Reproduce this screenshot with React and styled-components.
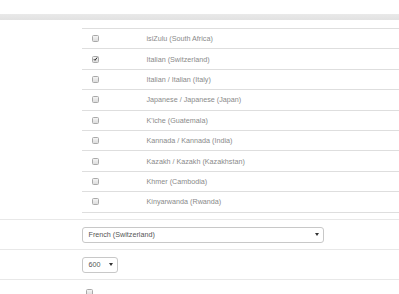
import React from "react";
import styled, { createGlobalStyle } from "styled-components";

const GlobalStyle = createGlobalStyle`
  html, body {
    margin: 0;
    padding: 0;
    background: #fff;
    font-family: "Liberation Sans", Arial, sans-serif;
  }
`;

const languages = [
  { name: "isiZulu (South Africa)" },
  { name: "Italian (Switzerland)", checked: true },
  { name: "Italian / Italian (Italy)" },
  { name: "Japanese / Japanese (Japan)" },
  { name: "K'iche (Guatemala)" },
  { name: "Kannada / Kannada (India)" },
  { name: "Kazakh / Kazakh (Kazakhstan)" },
  { name: "Khmer (Cambodia)" },
  { name: "Kinyarwanda (Rwanda)" },
];

const Page = styled.div`
  width: 100%;
  overflow: hidden;
`;

const HeaderBand = styled.div`
  margin-top: 14px;
  height: 6px;
  background: linear-gradient(#e9e9e9, #e2e2e2);
`;

const FormRow = styled.div`
  display: flex;
  border-top: ${(p) => (p.$first ? "none" : "1px solid #e8e8e8")};
  padding: ${(p) => (p.$first ? "8px 0 6px" : "7px 0 6px")};
`;

const Label = styled.div`
  width: 82px;
  flex-shrink: 0;
`;

const Field = styled.div`
  flex: 1;
  display: flex;
  align-items: flex-start;
  min-height: 16px;
`;

const LangList = styled.div`
  flex: 1;
  border-top: 1px solid #dedede;
`;

const LangRow = styled.div`
  box-sizing: border-box;
  height: 20.4px;
  display: grid;
  grid-template-columns: 64.5px 1fr;
  align-items: center;
  border-bottom: 1px solid #dedede;
`;

const CheckCell = styled.div`
  padding-left: 10px;
  display: flex;
  align-items: center;
`;

const Box = styled.span`
  box-sizing: border-box;
  width: 7px;
  height: 7px;
  border: 1px solid #a9a9a9;
  border-radius: 1.5px;
  background: linear-gradient(#f4f4f4, #dcdcdc);
  display: inline-flex;
  align-items: center;
  justify-content: center;
  margin-top: ${(p) => p.$offset || 0}px;
  margin-left: ${(p) => p.$left || 0}px;
`;

const LangName = styled.span`
  font-size: 7.2px;
  color: #8a8a8a;
  white-space: nowrap;
`;

const SelectBox = styled.div`
  box-sizing: border-box;
  width: ${(p) => p.$width}px;
  height: 16px;
  border: 1px solid #c8c8c8;
  border-radius: 3px;
  background: #fff;
  display: flex;
  align-items: center;
  justify-content: space-between;
  padding: 0 4px 0 5.5px;
  font-size: 7.2px;
  color: #555;
`;

function Checkbox({ checked, offset, left }) {
  return (
    <Box $offset={offset} $left={left}>
      {checked && (
        <svg width="6" height="6" viewBox="0 0 6 6">
          <path d="M1 3.2 L2.4 4.6 L5 1.2" fill="none" stroke="#222" strokeWidth="1.2" />
        </svg>
      )}
    </Box>
  );
}

function Arrow() {
  return (
    <svg width="4" height="3" viewBox="0 0 4 3">
      <path d="M0 0 H4 L2 3 Z" fill="#333" />
    </svg>
  );
}

export default function App() {
  return (
    <Page>
      <GlobalStyle />
      <HeaderBand />
      <FormRow $first>
        <Label />
        <LangList>
          {languages.map((l) => (
            <LangRow key={l.name}>
              <CheckCell>
                <Checkbox checked={l.checked} />
              </CheckCell>
              <LangName>{l.name}</LangName>
            </LangRow>
          ))}
        </LangList>
      </FormRow>
      <FormRow>
        <Label />
        <Field>
          <SelectBox $width={242}>
            <span>French (Switzerland)</span>
            <Arrow />
          </SelectBox>
        </Field>
      </FormRow>
      <FormRow>
        <Label />
        <Field>
          <SelectBox $width={36}>
            <span>600</span>
            <Arrow />
          </SelectBox>
        </Field>
      </FormRow>
      <FormRow>
        <Label />
        <Field>
          <Checkbox offset={2} left={4} />
        </Field>
      </FormRow>
    </Page>
  );
}
